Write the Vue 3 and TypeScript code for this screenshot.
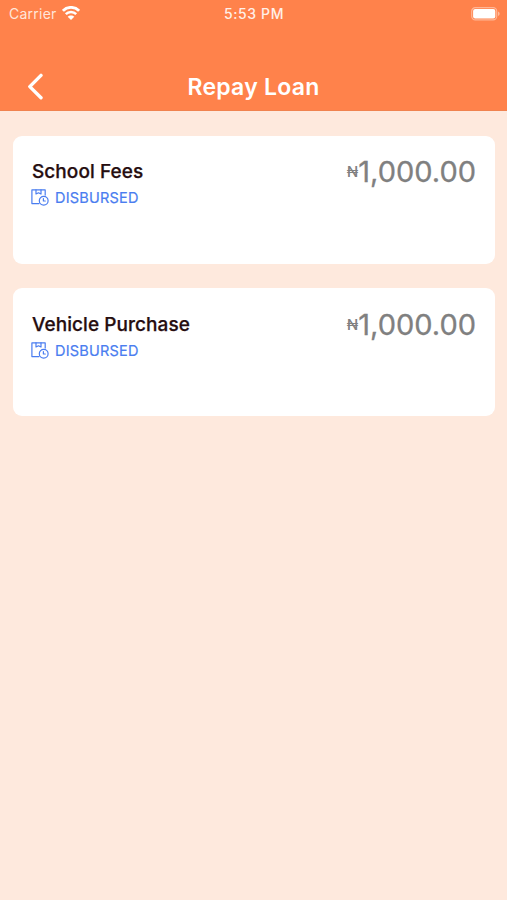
<script setup lang="ts">
interface Loan {
  id: number
  name: string
  status: string
  amount: string
}

const loans: Loan[] = [
  { id: 1, name: 'School Fees', status: 'DISBURSED', amount: '1,000.00' },
  { id: 2, name: 'Vehicle Purchase', status: 'DISBURSED', amount: '1,000.00' },
]
</script>

<template>
  <div class="screen">
    <header class="header">
      <div class="status-bar">
        <div class="network">
          <span class="carrier">Carrier</span>
          <svg class="wifi" width="18" height="14" viewBox="0 0 18 14" fill="none" stroke="#fff">
            <path d="M0.9 4.8C5.3 .2 12.7 .2 17.1 4.8" stroke-width="2.8" />
            <path d="M3.8 8.1C6.6 5.2 11.4 5.2 14.2 8.1" stroke-width="2.5" />
            <path d="M9 14 5.7 10.8C7.4 8.9 10.6 8.9 12.3 10.8Z" fill="#fff" stroke="none" />
          </svg>
        </div>
        <span class="time">5:53 PM</span>
        <div class="power">
          <svg class="battery" width="30" height="14" viewBox="0 0 30 14">
            <rect x="0.7" y="0.7" width="25" height="12.2" rx="3.6" fill="none" stroke="#fff" stroke-opacity=".42" stroke-width="1.2" />
            <rect x="2.1" y="2.1" width="22.2" height="9.4" rx="2" fill="#fff" />
            <path d="M27 4.6c2.2.9 2.2 3.5 0 4.4z" fill="#fff" fill-opacity=".45" />
          </svg>
        </div>
      </div>
      <div class="nav">
        <button class="back" type="button" aria-label="Back">
          <svg width="18" height="28" viewBox="0 0 18 28" fill="none" stroke="#fff" stroke-width="3.4" stroke-linecap="round" stroke-linejoin="round">
            <path d="M15 2.4 3.8 13.6 15 24.8" />
          </svg>
        </button>
        <h1 class="title">Repay Loan</h1>
      </div>
    </header>
    <main class="loans">
      <article v-for="loan in loans" :key="loan.id" class="card">
        <div class="details">
          <h2 class="name">{{ loan.name }}</h2>
          <div class="status">
            <svg width="18" height="17" viewBox="0 0 18 17" fill="none" stroke="#4a7df0" stroke-width="1.2" stroke-linejoin="round" stroke-linecap="round">
              <path d="M8 14.6H.9V.9H14.2V6.1" />
              <path d="M5 .9V5L7.5 3.8 10 5V.9" />
              <circle cx="12.7" cy="11.7" r="4.4" />
              <path d="M12.4 9.6V12H14.3" />
            </svg>
            <span class="label">{{ loan.status }}</span>
          </div>
        </div>
        <div class="amount"><span class="currency">₦</span><span class="value">{{ loan.amount }}</span></div>
      </article>
    </main>
  </div>
</template>

<style>
body {
  margin: 0;
  background: #fee9dd;
}
</style>

<style scoped>
.screen {
  min-height: 900px;
  background: #fee9dd;
  font-family: Inter, "Liberation Sans", sans-serif;
}
.header {
  box-sizing: border-box;
  height: 111px;
  background: #ff824b;
  border-bottom: 1px solid #f0824f;
  color: #fff;
}
.status-bar {
  display: grid;
  grid-template-columns: 1fr auto 1fr;
  align-items: center;
  height: 28px;
  padding: 0 6px 0 9px;
  font-size: 14px;
  line-height: 28px;
}
.network {
  display: flex;
  align-items: center;
  gap: 5px;
}
.carrier {
  color: #ffe6da;
  letter-spacing: 0.25px;
}
.wifi {
  margin-top: -2px;
}
.time {
  margin-right: 2px;
  color: #fff0e8;
  font-weight: 500;
  letter-spacing: 0.6px;
}
.power {
  display: flex;
  justify-content: flex-end;
}
.nav {
  display: grid;
  grid-template-columns: 60px 1fr 60px;
  align-items: center;
  height: 40px;
  margin-top: 39px;
}
.back {
  display: flex;
  padding: 0 0 0 26px;
  border: 0;
  background: none;
}
.title {
  margin: 0;
  font-size: 23px;
  font-weight: 600;
  letter-spacing: 0.25px;
  line-height: 40px;
  text-align: center;
}
.loans {
  display: grid;
  gap: 24.8px;
  padding: 24.6px 12px 25px 13px;
}
.card {
  box-sizing: border-box;
  display: flex;
  justify-content: space-between;
  height: 128px;
  padding: 22.2px 19px 0 18px;
  border-radius: 9px;
  background: #fff;
}
.name {
  margin: 0 0 0 1px;
  color: #260d0f;
  font-size: 19px;
  font-weight: 500;
  letter-spacing: 0.06px;
  line-height: 28px;
  -webkit-text-stroke: 0.25px currentColor;
}
.status {
  display: flex;
  align-items: center;
  gap: 6px;
  height: 23.6px;
  color: #4a7df0;
  font-size: 14.5px;
  letter-spacing: 0.2px;
  -webkit-text-stroke: 0.2px currentColor;
}
.amount {
  display: flex;
  align-items: center;
  height: 27.6px;
  color: #808080;
}
.currency {
  font-size: 15px;
  font-weight: 500;
}
.value {
  font-size: 29px;
  -webkit-text-stroke: 0.3px currentColor;
}
</style>
